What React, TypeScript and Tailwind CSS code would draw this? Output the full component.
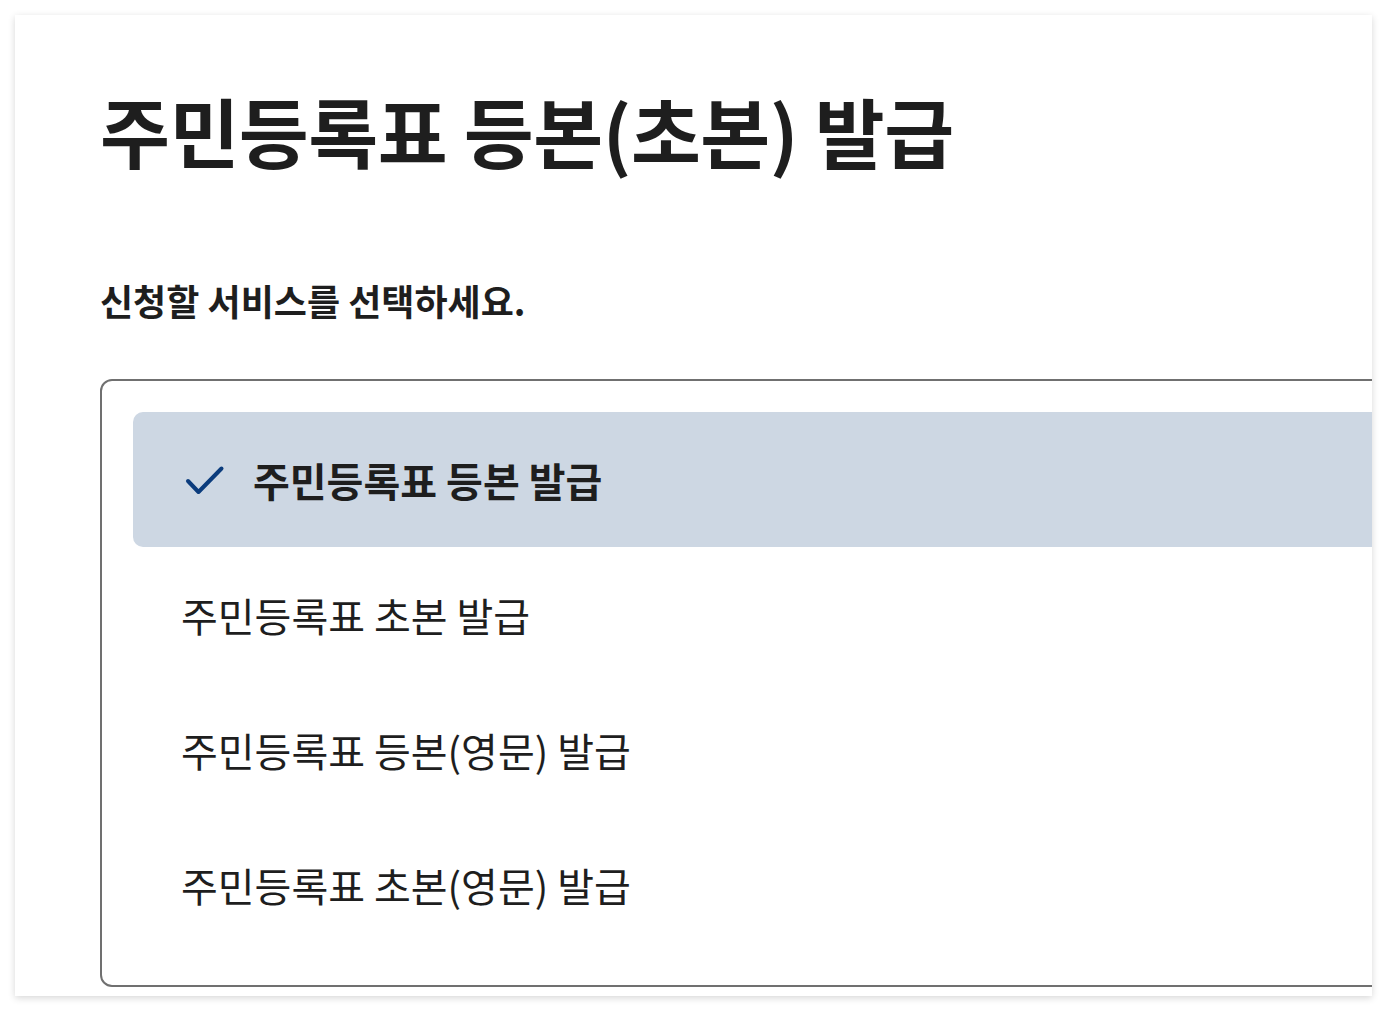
import { useState } from "react";

const services = [
  "주민등록표 등본 발급",
  "주민등록표 초본 발급",
  "주민등록표 등본(영문) 발급",
  "주민등록표 초본(영문) 발급",
];

function CheckIcon() {
  return (
    <svg width="48" height="48" viewBox="0 0 48 48" fill="none" className="shrink-0">
      <path
        d="M7 25 L17.5 36 L40.5 12.5"
        stroke="#0b3c7d"
        strokeWidth="4"
        strokeLinecap="round"
        strokeLinejoin="round"
      />
    </svg>
  );
}

export default function App() {
  const [selected, setSelected] = useState(0);

  return (
    <div
      className="min-h-screen bg-white pt-[15px] pl-[15px]"
      style={{ fontFamily: '"Noto Sans CJK KR", "Noto Sans", sans-serif' }}
    >
      <div className="w-[1357px] h-[981px] bg-white overflow-hidden shadow-[0_2px_7px_rgba(0,0,0,0.16)] pl-[85px] pt-[70px]">
        <h1 className="text-[76px] leading-[90px] font-bold text-[#1e1e1e] tracking-[-0.5px]">
          주민등록표 등본(초본) 발급
        </h1>

        <p className="mt-[105px] text-[36px] leading-[40px] font-bold text-[#1e1e1e]">
          신청할 서비스를 선택하세요.
        </p>

        <div className="mt-[59px] w-[1400px] border-2 border-[#707070] rounded-[12px] px-[31px] pt-[31px] pb-[33px]">
          {services.map((name, idx) => {
            const active = idx === selected;
            return (
              <button
                key={name}
                onClick={() => setSelected(idx)}
                className={`w-full h-[135px] flex items-center gap-[24px] pl-[48px] rounded-[10px] text-left text-[40px] leading-[48px] text-[#1e1e1e] ${
                  active ? "bg-[#cdd7e3] font-bold" : "bg-transparent font-normal"
                }`}
              >
                {active && <CheckIcon />}
                <span>{name}</span>
              </button>
            );
          })}
        </div>
      </div>
    </div>
  );
}
